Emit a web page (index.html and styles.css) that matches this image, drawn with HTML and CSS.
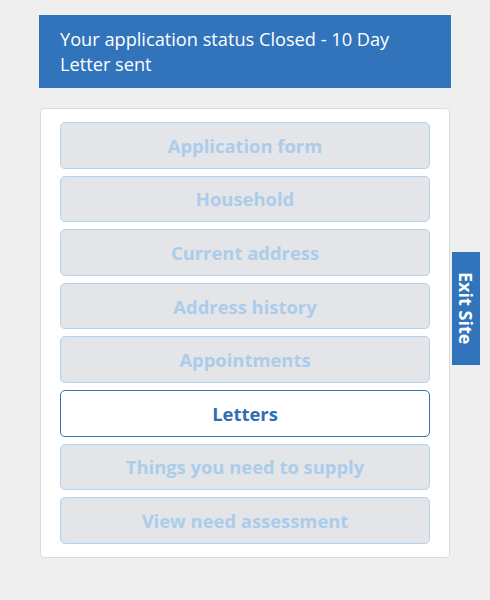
FILE: index.html
```html
<!DOCTYPE html>
<html>
<head>
<meta charset="utf-8">
<link rel="stylesheet" href="styles.css">
</head>
<body>
<div class="page">
  <div class="status">Your application status Closed - 10 Day Letter sent</div>
  <div class="card">
    <div class="nav-btn">Application form</div>
    <div class="nav-btn">Household</div>
    <div class="nav-btn">Current address</div>
    <div class="nav-btn">Address history</div>
    <div class="nav-btn">Appointments</div>
    <div class="nav-btn active">Letters</div>
    <div class="nav-btn">Things you need to supply</div>
    <div class="nav-btn">View need assessment</div>
  </div>
</div>
<div class="exit">Exit Site</div>
</body>
</html>
```

FILE: styles.css
```css
html, body {
  margin: 0;
  padding: 0;
  background: #efefef;
  font-family: "Open Sans", "Noto Sans", sans-serif;
}
.page {
  width: 412px;
  margin-left: 39px;
  padding-top: 15px;
}
.status {
  background: #3174bc;
  color: #ffffff;
  font-size: 18.2px;
  line-height: 25px;
  padding: 12px 21px 11px 21px;
  height: 50px;
}
.card {
  margin: 20px 1px 0 1px;
  background: #ffffff;
  border: 1px solid #dcdcdc;
  border-radius: 4px;
  padding: 13px 19px 13px 19px;
  display: flex;
  flex-direction: column;
  gap: 7px;
}
.nav-btn {
  box-sizing: border-box;
  height: 46.6px;
  border: 1.5px solid #b3d2ee;
  border-radius: 5px;
  background: #e4e5e9;
  color: #abcdea;
  font-weight: 700;
  font-size: 18.4px;
  display: flex;
  align-items: center;
  justify-content: center;
}
.nav-btn.active {
  background: #ffffff;
  border-color: #2f72bb;
  color: #2f6db5;
}
.exit {
  position: absolute;
  left: 452px;
  top: 252px;
  width: 28px;
  height: 113px;
  background: #3174bc;
  color: #ffffff;
  writing-mode: vertical-rl;
  font-weight: 700;
  font-size: 18px;
  display: flex;
  align-items: center;
  justify-content: center;
  box-sizing: border-box;
}
```
